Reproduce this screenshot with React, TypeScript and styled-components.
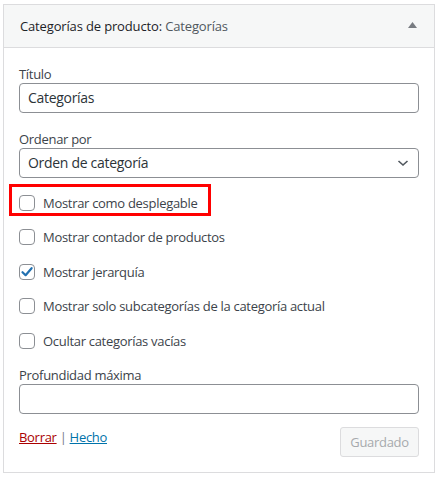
import styled, { createGlobalStyle } from "styled-components";

const GlobalStyle = createGlobalStyle`
  html, body {
    margin: 0;
    padding: 0;
    background: #ffffff;
  }
  body {
    font-family: "Open Sans", "Noto Sans", "Liberation Sans", sans-serif;
    font-size: 13px;
    letter-spacing: -0.3px;
    color: #3c434a;
  }
`;

const Page = styled.div`
  padding: 4px 0 0 3px;
`;

const Widget = styled.div`
  width: 432px;
  height: 469px;
  box-sizing: border-box;
  border: 1px solid #dcdcde;
  background: #fff;
  display: flex;
  flex-direction: column;
`;

const WidgetTop = styled.div`
  height: 44px;
  box-sizing: border-box;
  background: #f6f7f7;
  border-bottom: 1px solid #dcdcde;
  display: flex;
  align-items: center;
  justify-content: space-between;
  padding: 2px 17px 0 16px;
`;

const Title = styled.h3`
  margin: 0;
  font-size: 13px;
  font-weight: 400;
  letter-spacing: -0.15px;
  color: #1d2327;
  line-height: 1;
`;

const TitleSuffix = styled.span`
  color: #50575e;
`;

const Arrow = styled.svg`
  margin-top: -3px;
`;

const Inside = styled.div`
  flex: 1;
  display: flex;
  flex-direction: column;
  padding: 17px 15px 15px;
`;

const Field = styled.div<{ $mt?: number }>`
  display: flex;
  flex-direction: column;
  margin-top: ${(p) => p.$mt ?? 0}px;
`;

const Label = styled.label`
  line-height: 18px;
  color: #3c434a;
`;

const TextInput = styled.input`
  box-sizing: border-box;
  width: 400px;
  height: 30px;
  margin: 0;
  padding: 0 8px;
  border: 1px solid #8c8f94;
  border-radius: 4px;
  font: inherit;
  font-size: 14px;
  letter-spacing: -0.3px;
  color: #2c3338;
  background: #fff;
  outline: none;
`;

const SelectBox = styled.div`
  position: relative;
  box-sizing: border-box;
  width: 400px;
  height: 30px;
  padding: 0 24px 0 8px;
  border: 1px solid #8c8f94;
  border-radius: 4px;
  display: flex;
  align-items: center;
  justify-content: space-between;
  font-size: 14px;
  color: #2c3338;
  background: #fff;
`;

const Chevron = styled.svg`
  position: absolute;
  right: 9px;
  top: 9px;
`;

const Checks = styled.div`
  display: flex;
  flex-direction: column;
  margin-top: 8px;
`;

const CheckRow = styled.div<{ $highlight?: boolean }>`
  position: relative;
  height: 34.5px;
  display: flex;
  align-items: center;
  gap: 8px;
  color: #3c434a;

  ${(p) =>
    p.$highlight &&
    `
    &::before {
      content: "";
      position: absolute;
      left: -10px;
      top: -1.5px;
      width: 202px;
      height: 32px;
      box-sizing: border-box;
      border: 3px solid #ff0000;
    }
  `}
`;

const Box = styled.span`
  width: 16px;
  height: 16px;
  box-sizing: border-box;
  border: 1px solid #8c8f94;
  border-radius: 4px;
  background: #fff;
  display: flex;
  align-items: center;
  justify-content: center;
  flex-shrink: 0;
`;

const Footer = styled.div`
  margin-top: 13px;
  display: flex;
  justify-content: space-between;
  align-items: flex-start;
`;

const Links = styled.div`
  line-height: 18px;
  margin-top: 1px;
  color: #787c82;
`;

const Link = styled.a<{ $danger?: boolean }>`
  color: ${(p) => (p.$danger ? "#aa0000" : "#0073aa")};
  text-decoration: underline;
  cursor: pointer;
`;

const SaveButton = styled.button`
  box-sizing: border-box;
  width: 79px;
  height: 30px;
  padding: 0 8px;
  border: 1px solid #dcdcde;
  border-radius: 3px;
  background: #f6f7f7;
  color: #a7aaad;
  font: inherit;
  font-size: 13px;
  letter-spacing: -0.3px;
`;

const checks = [
  { label: "Mostrar como desplegable", checked: false, highlight: true },
  { label: "Mostrar contador de productos", checked: false },
  { label: "Mostrar jerarquía", checked: true },
  { label: "Mostrar solo subcategorías de la categoría actual", checked: false },
  { label: "Ocultar categorías vacías", checked: false },
];

export default function App() {
  return (
    <Page>
      <GlobalStyle />
      <Widget>
        <WidgetTop>
          <Title>
            Categorías de producto: <TitleSuffix>Categorías</TitleSuffix>
          </Title>
          <Arrow width="9" height="6" viewBox="0 0 9 6">
            <path d="M4.5 0 L9 6 L0 6 Z" fill="#787c82" />
          </Arrow>
        </WidgetTop>
        <Inside>
          <Field>
            <Label>Título</Label>
            <TextInput defaultValue="Categorías" />
          </Field>
          <Field $mt={17}>
            <Label>Ordenar por</Label>
            <SelectBox>
              Orden de categoría
              <Chevron width="12" height="10" viewBox="0 0 12 10">
                <path d="M1.5 3 L6 7 L10.5 3" stroke="#50575e" strokeWidth="1.6" fill="none" />
              </Chevron>
            </SelectBox>
          </Field>
          <Checks>
            {checks.map((c) => (
              <CheckRow key={c.label} $highlight={c.highlight}>
                <Box>
                  {c.checked && (
                    <svg width="14" height="14" viewBox="0 0 14 14">
                      <path
                        d="M2.5 7.2 L5.6 10.2 L11.6 3.2"
                        stroke="#2271b1"
                        strokeWidth="2.2"
                        fill="none"
                        strokeLinecap="round"
                        strokeLinejoin="round"
                      />
                    </svg>
                  )}
                </Box>
                <span>{c.label}</span>
              </CheckRow>
            ))}
          </Checks>
          <Field $mt={8}>
            <Label>Profundidad máxima</Label>
            <TextInput />
          </Field>
          <Footer>
            <Links>
              <Link $danger>Borrar</Link> | <Link>Hecho</Link>
            </Links>
            <SaveButton disabled>Guardado</SaveButton>
          </Footer>
        </Inside>
      </Widget>
    </Page>
  );
}
